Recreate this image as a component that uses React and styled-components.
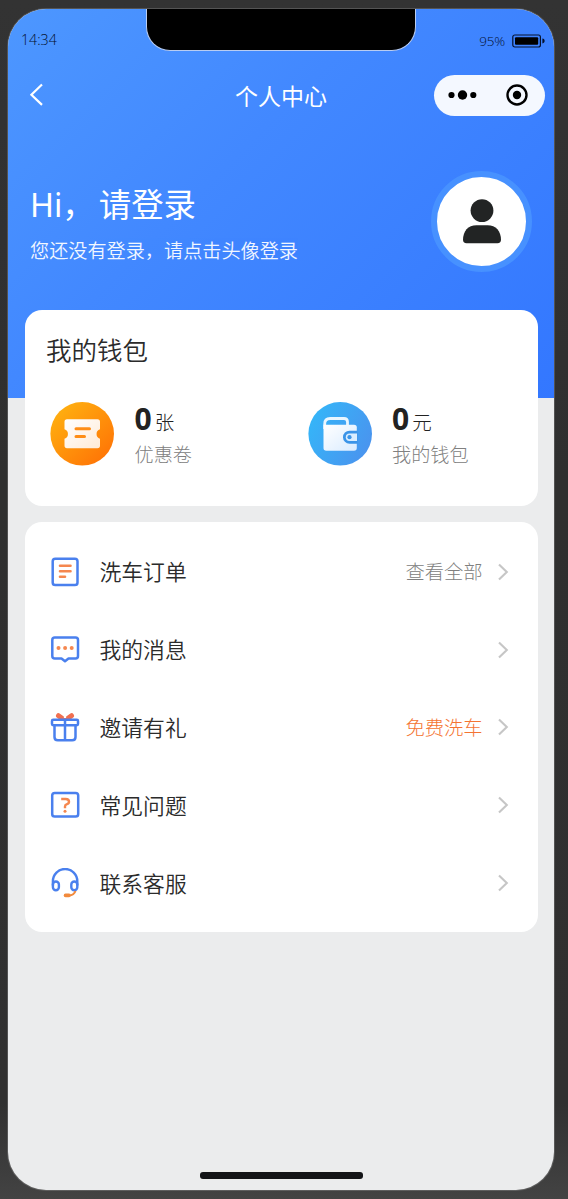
import React from 'react';
import styled, { createGlobalStyle } from 'styled-components';

const GlobalStyle = createGlobalStyle`
  * {
    box-sizing: border-box;
  }
  body {
    margin: 0;
    background: #313131;
    font-family: 'Noto Sans', 'Noto Sans CJK SC', sans-serif;
  }
`;

const Stage = styled.div`
  height: 1199px;
  padding: 9px 14px 9px 8px;
  background: linear-gradient(180deg, #333333 0%, #2f2f2f 40%, #303030 92%, #434343 100%);
`;

const Phone = styled.div`
  position: relative;
  display: flex;
  flex-direction: column;
  width: 546px;
  height: 1181px;
  border-radius: 38px;
  overflow: hidden;
  background: #ebeced;
  box-shadow: 0 0 0 1px rgba(150, 150, 150, 0.35);
`;

const Notch = styled.div`
  position: absolute;
  top: 0;
  left: 138px;
  width: 270px;
  height: 42px;
  background: #000;
  border: 1px solid #b9cdf2;
  border-top: 0;
  border-radius: 0 0 24px 24px;
`;

const Header = styled.header`
  flex: none;
  height: 389px;
  background: linear-gradient(135deg, #4d97ff 0%, #4288ff 40%, #3377ff 100%);
`;

const StatusBar = styled.div`
  display: flex;
  align-items: center;
  justify-content: space-between;
  height: 62px;
  padding: 0 9px 0 13px;
  color: #04102e;
  font-family: 'Open Sans', 'Noto Sans', sans-serif;
  font-size: 14.2px;
  font-weight: 300;
  line-height: 20px;
`;

const Battery = styled.div`
  display: flex;
  align-items: center;
  gap: 7px;
  padding-top: 2px;
  font-size: 13.5px;
  letter-spacing: -0.2px;
`;

const NavBar = styled.nav`
  display: flex;
  align-items: center;
  justify-content: space-between;
  height: 48px;
  padding: 0 9px 0 19px;
  color: #fff;
`;

const Title = styled.h1`
  margin: 2px 0 0 84px;
  font-size: 23px;
  font-weight: 400;
  line-height: 32px;
`;

const Capsule = styled.div`
  display: flex;
  align-items: center;
  justify-content: space-between;
  width: 111px;
  height: 41px;
  padding: 0 17px 0 14px;
  border-radius: 21px;
  background: #f4f8ff;
`;

const Profile = styled.section`
  display: flex;
  justify-content: space-between;
  padding: 52px 22px 0 22px;
  color: #fff;
`;

const Hello = styled.div`
  margin-top: 11px;
  font-size: 32.4px;
  line-height: 44px;
`;

const Hi = styled.span`
  margin-right: 4px;
`;

const Tip = styled.div`
  margin-top: 10px;
  font-size: 19.15px;
  font-weight: 350;
  line-height: 30px;
  opacity: 0.93;
`;

const Avatar = styled.div`
  display: flex;
  align-items: center;
  justify-content: center;
  width: 101px;
  height: 101px;
  border: 6px solid #4791ff;
  border-radius: 50%;
  background: #fff;
`;

const Content = styled.main`
  position: relative;
  display: flex;
  flex: 1;
  flex-direction: column;
  gap: 16px;
  margin-top: -88px;
  padding: 0 16.5px 0 17px;
`;

const Card = styled.section`
  border-radius: 17px;
  background: #fff;
`;

const WalletCard = styled(Card)`
  height: 196px;
  padding: 22px 21px 0;
`;

const CardTitle = styled.h2`
  margin: 0;
  color: #2b2b2b;
  font-size: 25.5px;
  font-weight: 350;
  line-height: 36px;
`;

const WalletGrid = styled.div`
  display: grid;
  grid-template-columns: 257.5px 1fr;
  margin-top: 29px;
  padding-left: 4px;
`;

const WalletItem = styled.div`
  display: flex;
  align-items: center;
  gap: 20.5px;
  height: 74px;
`;

const Amount = styled.div`
  display: flex;
  align-items: baseline;
  gap: 3px;
  padding-top: 8px;
  color: #222;
  font-size: 19.5px;
  font-weight: 300;
  line-height: 30px;

  b {
    font-size: 30px;
    font-weight: 700;
  }
`;

const AmountLabel = styled.div`
  color: #808080;
  font-size: 19.15px;
  font-weight: 300;
  line-height: 34px;
`;

const MenuCard = styled(Card)`
  height: 410px;
  padding: 11px 25px 0;
`;

const MenuItem = styled.div`
  display: flex;
  align-items: center;
  height: 77.8px;
`;

const MenuLabel = styled.div`
  flex: 1;
  margin-left: 19.5px;
  padding-top: 1px;
  color: #2b2b2b;
  font-size: 21.8px;
  font-weight: 350;
  line-height: 32px;
`;

const MenuNote = styled.div`
  margin-right: 13px;
  padding-top: 1px;
  color: ${(props) => (props.$hot ? '#f47432' : '#808080')};
  font-size: 19.3px;
  font-weight: 300;
  line-height: 30px;
`;

const HomeBar = styled.div`
  width: 163px;
  height: 7px;
  margin: auto auto 11px 174.5px;
  border-radius: 3px;
  background: #131417;
`;

const BLUE = '#4a80ee';
const ORANGE = '#f5874f';

const BatteryIcon = () => (
  <svg width="33" height="14" viewBox="0 0 33 14">
    <rect x="0.8" y="1" width="27.6" height="12" rx="2" fill="none" stroke="#06122e" strokeWidth="1.2" />
    <rect x="3" y="3.2" width="23.2" height="7.6" rx="1" fill="#000" />
    <path d="M30.4 4.6c3 .4 3 4.4 0 4.8z" fill="#06122e" />
  </svg>
);

const BackIcon = () => (
  <svg width="17" height="24" viewBox="0 0 17 24">
    <path d="M15 1.5 4.4 11.7 15 21.9" fill="none" stroke="#fff" strokeWidth="2.2" />
  </svg>
);

const DotsIcon = () => (
  <svg width="29" height="12" viewBox="0 0 29 12">
    <circle cx="3.5" cy="6" r="3.1" />
    <circle cx="14.5" cy="6" r="4.7" />
    <circle cx="25.3" cy="6" r="3.1" />
  </svg>
);

const TargetIcon = () => (
  <svg width="22" height="22" viewBox="0 0 22 22">
    <circle cx="11" cy="11" r="9.5" fill="none" stroke="#000" strokeWidth="2.4" />
    <circle cx="11" cy="11" r="4.2" />
  </svg>
);

const UserIcon = () => (
  <svg width="40" height="46" viewBox="0 0 40 46" fill="#222424">
    <circle cx="20" cy="11.6" r="11.4" />
    <path d="M14.5 26.300h11c8.500 0 13.500 6 13.500 14.500 0 2.300-1.200 3.500-3.500 3.500H4.500c-2.300 0-3.500-1.200-3.500-3.500C1 32.300 6 26.300 14.500 26.300z" />
  </svg>
);

const CouponIcon = () => (
  <svg width="64" height="64" viewBox="0 0 64 64">
    <defs>
      <linearGradient id="coupon" x1="0.1" y1="0.1" x2="0.85" y2="0.9">
        <stop offset="0" stopColor="#ffb010" />
        <stop offset="1" stopColor="#ff7606" />
      </linearGradient>
      <linearGradient id="ticket" x1="0" y1="0" x2="1" y2="1">
        <stop offset="0" stopColor="#fff" />
        <stop offset="1" stopColor="#ffead6" />
      </linearGradient>
    </defs>
    <circle cx="32.200" cy="31.800" r="31.800" fill="url(#coupon)" />
    <path
      d="M17 17.200h30.500q2.500 0 2.500 2.500v7.500a5 5 0 0 0 0 9.500V43.500q0 2.800-2.500 2.800H17q-2.500 0-2.500-2.800v-6.800a5 5 0 0 0 0-9.500V19.700q0-2.500 2.500-2.500z"
      fill="url(#ticket)"
    />
    <path d="M26 26.800h13.500M26 34.600h8.500" stroke="#ff8d16" strokeWidth="3" strokeLinecap="round" />
  </svg>
);

const WalletIcon = () => (
  <svg width="64" height="64" viewBox="0 0 64 64">
    <defs>
      <linearGradient id="wallet" x1="0" y1="0.3" x2="1" y2="0.8">
        <stop offset="0" stopColor="#35b5f8" />
        <stop offset="1" stopColor="#4b92ee" />
      </linearGradient>
      <linearGradient id="purse" x1="0" y1="0" x2="1" y2="1">
        <stop offset="0" stopColor="#fff" />
        <stop offset="1" stopColor="#d9ebff" />
      </linearGradient>
    </defs>
    <circle cx="32.200" cy="31.800" r="31.800" fill="url(#wallet)" />
    <path d="M16.700 27v-5q0-5.500 5.500-5.500H36q3.500 0 3.500 3.500v4" fill="none" stroke="#e9f6ff" strokeWidth="2.800" />
    <path
      d="M15.500 22.800h30.500q2.800 0 2.800 2.800V46q0 2.800-2.800 2.800H18.300q-2.800 0-2.800-2.800z"
      fill="url(#purse)"
    />
    <path d="M49.500 28.700h-8a6.500 6.500 0 0 0 0 13h8z" fill="#3b94e8" />
    <path d="M49 31.500h-7.500a3.700 3.700 0 0 0 0 7.400h7.500z" fill="#d9edff" />
    <circle cx="41.500" cy="35.200" r="2.100" fill="#3b94e8" />
  </svg>
);

const OrderIcon = () => (
  <svg width="30" height="30" viewBox="0 0 30 30" fill="none" strokeLinecap="round">
    <rect x="2.700" y="1.700" width="24.800" height="26.300" rx="2.600" stroke={BLUE} strokeWidth="2.500" />
    <path d="M10 8.800h10.500M10 14.300h10.500M10 19.700h5" stroke={ORANGE} strokeWidth="2.600" />
  </svg>
);

const MessageIcon = () => (
  <svg width="30" height="30" viewBox="0 0 30 30" fill="none">
    <path
      d="M4.800 2.500h20.700q2.500 0 2.500 2.500v16q0 2.500-2.500 2.500H18.500L15 26.300l-3.500-2.800H4.800q-2.500 0-2.500-2.500V5q0-2.500 2.500-2.500z"
      stroke={BLUE}
      strokeWidth="2.500"
      strokeLinejoin="round"
    />
    <g fill={ORANGE}>
      <circle cx="8.500" cy="13" r="2" />
      <circle cx="15.100" cy="13" r="2" />
      <circle cx="21.700" cy="13" r="2" />
    </g>
  </svg>
);

const GiftIcon = () => (
  <svg width="30" height="30" viewBox="0 0 30 30" fill="none">
    <path d="M13.800 7.500 8.500 3.700M16.200 7.500l5.300-3.800" stroke="#f17050" strokeWidth="5" strokeLinecap="round" />
    <path d="M15 1v5" stroke="#fff" strokeWidth="2.200" />
    <g stroke={BLUE} strokeWidth="2.500" strokeLinejoin="round">
      <rect x="2" y="7.800" width="26" height="5.400" rx="1.200" fill="#fff" />
      <path d="M4.500 13.500v11.500q0 3.300 3.300 3.300h14.400q3.300 0 3.300-3.300V13.500M15 8V28" />
    </g>
  </svg>
);

const QuestionIcon = () => (
  <svg width="30" height="30" viewBox="0 0 30 30" fill="none">
    <rect x="2.200" y="3" width="26" height="23.600" rx="2.600" stroke={BLUE} strokeWidth="2.500" />
    <path
      d="M11.200 9h4.500q3.300 0 3.300 2.700 0 1.900-2 2.500-2 .600-2 2.300v1.700"
      stroke={ORANGE}
      strokeWidth="2.400"
    />
    <circle cx="15" cy="21.300" r="1.500" fill={ORANGE} />
  </svg>
);

const ServiceIcon = () => (
  <svg width="30" height="30" viewBox="0 0 30 30" fill="none">
    <g stroke={BLUE} strokeWidth="2.400">
      <path d="M2.900 17.500v-4.300a12.200 12.200 0 0 1 24.400 0v4.300" />
      <rect x="2.900" y="13.500" width="6" height="8.800" rx="3" />
      <rect x="21.300" y="13.500" width="6" height="8.800" rx="3" />
    </g>
    <path d="M25.500 23q-1.500 4.300-6.500 4.600" stroke="#f28a3c" strokeWidth="2" />
    <path d="M15.500 27.400h3.500" stroke="#f28a3c" strokeWidth="3.600" strokeLinecap="round" />
  </svg>
);

const ArrowIcon = () => (
  <svg width="17" height="20" viewBox="0 0 17 20">
    <path d="M3 2.500 10.800 10 3 17.500" fill="none" stroke="#c6c6c6" strokeWidth="2.100" />
  </svg>
);

const wallet = [
  { icon: CouponIcon, amount: 0, unit: '张', label: '优惠卷' },
  { icon: WalletIcon, amount: 0, unit: '元', label: '我的钱包' },
];

const menu = [
  { icon: OrderIcon, label: '洗车订单', note: '查看全部' },
  { icon: MessageIcon, label: '我的消息' },
  { icon: GiftIcon, label: '邀请有礼', note: '免费洗车', hot: true },
  { icon: QuestionIcon, label: '常见问题' },
  { icon: ServiceIcon, label: '联系客服' },
];

const App = () => {
  return (
    <Stage>
      <GlobalStyle />
      <Phone>
        <Header>
          <StatusBar>
            <span>14:34</span>
            <Battery>
              95%
              <BatteryIcon />
            </Battery>
          </StatusBar>
          <NavBar>
            <BackIcon />
            <Title>个人中心</Title>
            <Capsule>
              <DotsIcon />
              <TargetIcon />
            </Capsule>
          </NavBar>
          <Profile>
            <div>
              <Hello>
                <Hi>Hi，</Hi>请登录
              </Hello>
              <Tip>您还没有登录，请点击头像登录</Tip>
            </div>
            <Avatar>
              <UserIcon />
            </Avatar>
          </Profile>
        </Header>
        <Notch />
        <Content>
          <WalletCard>
            <CardTitle>我的钱包</CardTitle>
            <WalletGrid>
              {wallet.map(({ icon: Icon, amount, unit, label }) => (
                <WalletItem key={label}>
                  <Icon />
                  <div>
                    <Amount>
                      <b>{amount}</b>
                      {unit}
                    </Amount>
                    <AmountLabel>{label}</AmountLabel>
                  </div>
                </WalletItem>
              ))}
            </WalletGrid>
          </WalletCard>
          <MenuCard>
            {menu.map(({ icon: Icon, label, note, hot }) => (
              <MenuItem key={label}>
                <Icon />
                <MenuLabel>{label}</MenuLabel>
                {note && <MenuNote $hot={hot}>{note}</MenuNote>}
                <ArrowIcon />
              </MenuItem>
            ))}
          </MenuCard>
          <HomeBar />
        </Content>
      </Phone>
    </Stage>
  );
};

export default App;
